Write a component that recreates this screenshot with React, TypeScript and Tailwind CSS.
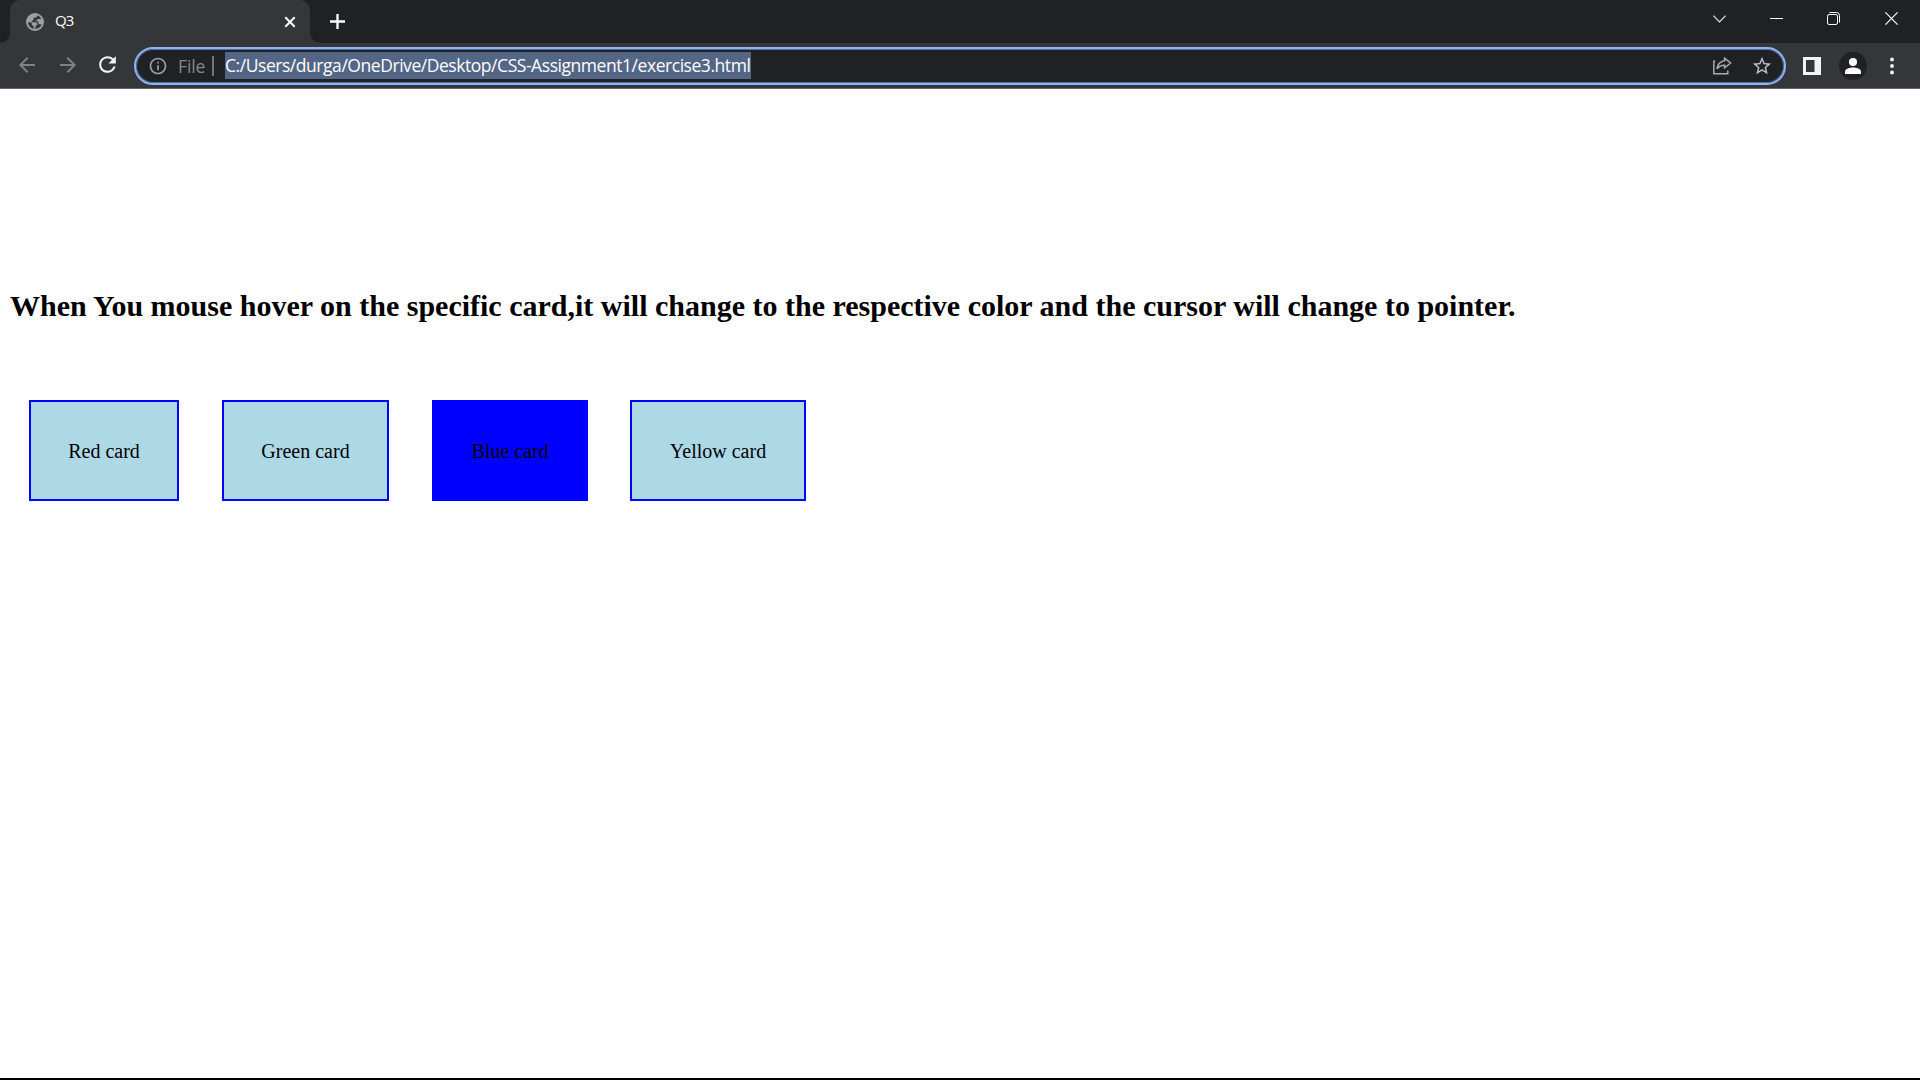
import React from "react";
import { MdRefresh, MdStarBorder, MdInfoOutline, MdArrowBack, MdArrowForward } from "react-icons/md";

function Globe() {
  return (
    <svg className="ml-[2px] size-[18px] shrink-0" viewBox="0 0 18 18">
      <circle cx="9" cy="9" r="9" fill="#9aa0a6" />
      <g fill="#35363a">
        <path d="M11.400 2.300C11.200 4 10.300 4.700 8.800 4.700H7.400V6.200C7.400 7.300 6.800 7.900 5.600 7.900V9.200H9.200C10.600 9.200 11.300 10 11.300 11.400V12.200H9.700V14C9.700 14.900 9 15.600 8.100 15.800C11.500 16.300 14.700 14.400 15.700 11.200H13.800C12.800 11.200 12.200 10.600 12.200 9.500V8.400H10.400C10.400 6.800 11.200 5.900 12.700 5.900H15.200C14.300 4.200 13 3 11.400 2.300z" />
        <path d="M2.100 9.200H3.900C5.300 9.200 6 10 6 11.200C6 12.300 6.600 12.800 7.700 12.800V15.800C4.500 15.200 2.100 12.500 2.100 9.200z" />
      </g>
    </svg>
  );
}

function TabStrip() {
  return (
    <div className="flex h-[43px] items-start bg-[#202124] text-white">
      <div className="flex h-[43px] w-[10px] items-end bg-[#35363a]">
        <div className="h-full w-full rounded-br-[10px] bg-[#202124]" />
      </div>
      <div className="flex h-[43px] w-[300px] items-center rounded-t-[10px] bg-[#35363a] pl-[14px] pr-[14px]">
        <Globe />
        <span className="ml-[11px] grow pb-[4px] font-['Open_Sans',sans-serif] text-[15px] leading-5 tracking-[-0.8px]">Q3</span>
        <svg className="size-3 shrink-0" viewBox="0 0 12 12" fill="none" stroke="#fff" strokeWidth="2">
          <path d="M1.3 1.3l9.4 9.4M10.7 1.3L1.3 10.7" />
        </svg>
      </div>
      <div className="flex h-[43px] w-[10px] bg-[#35363a]">
        <div className="h-full w-full rounded-bl-[10px] bg-[#202124]" />
      </div>
      <svg className="ml-[10px] mt-[14px] size-[15px]" viewBox="0 0 15 15" fill="none" stroke="#fff" strokeWidth="2.3">
        <path d="M7.5 0v15M0 7.5h15" />
      </svg>
      <div className="ml-auto flex h-[37px] items-center">
        <svg className="mr-[44px] h-[8px] w-[13px]" viewBox="0 0 13 8" fill="none" stroke="#e8e8e8" strokeWidth="1.1">
          <path d="M.4 .7l6.1 6.3L12.6 .7" />
        </svg>
        <svg className="mr-[44px] h-[13px] w-[13px]" viewBox="0 0 13 13" stroke="#fff">
          <path d="M0 6.5h13" />
        </svg>
        <svg className="mr-[45px] size-[13px]" viewBox="0 0 13 13" fill="none" stroke="#fff">
          <rect x=".5" y="2.5" width="10" height="10" rx="1.6" />
          <path d="M2.5 .5h7a3 3 0 0 1 3 3v7" />
        </svg>
        <svg className="mr-[22px] size-[13px]" viewBox="0 0 13 13" fill="none" stroke="#fff" strokeWidth="1.2">
          <path d="M.4 .4l12.2 12.2M12.6 .4L.4 12.6" />
        </svg>
      </div>
    </div>
  );
}

function Toolbar() {
  return (
    <div className="flex h-[46px] items-center border-b border-[#626366] bg-[#35363a] font-['Open_Sans',sans-serif]">
      <MdArrowBack className="mb-[2px] ml-[15px] size-6 shrink-0 text-[#808184]" />
      <MdArrowForward className="mb-[2px] ml-[17px] size-6 shrink-0 text-[#808184]" />
      <MdRefresh className="mb-[2px] ml-[15px] size-[25px] shrink-0 text-[#f1f3f4]" />
      <div className="ml-[14px] flex h-[38px] w-[1652px] items-center rounded-full border-2 border-[#8ab4f8] bg-[#202124] inset-ring inset-ring-[#566d94]">
        <MdInfoOutline className="ml-[12px] size-[20px] shrink-0 text-[#9aa0a6]" />
        <span className="ml-[10px] w-[27px] whitespace-nowrap text-[17.5px] leading-5 tracking-[-0.1px] text-[#85888c]">File</span>
        <div className="ml-[7px] h-5 w-[2px] bg-[#737578]" />
        <span className="ml-[11px] h-[27px] w-[526px] whitespace-nowrap bg-[#546685] text-[17.5px] leading-[27px] tracking-[-0.45px] text-white">
          C:/Users/durga/OneDrive/Desktop/CSS-Assignment1/exercise3.html
        </span>
        <svg className="ml-auto size-[20px] shrink-0" viewBox="0 0 20 20" fill="none" stroke="#a9abae" strokeWidth="1.5">
          <path d="M3.200 5.200H1.800v12.600h14v-3.200" />
          <path d="M12.600 2.200l6 4.800-6 4.800V9.200c-3.800 0-6 1.300-7.600 3.700.5-4.100 2.900-7.500 7.600-8.100z" />
        </svg>
        <MdStarBorder className="ml-[19px] mr-[11px] size-[22px] shrink-0 text-[#bdc1c6]" />
      </div>
      <svg className="ml-[17px] size-[18px] shrink-0" viewBox="0 0 18 18">
        <path fill="#f1f3f4" fillRule="evenodd" d="M0 0h18v18H0zM3 3v12h8.500V3z" />
      </svg>
      <div className="ml-[18px] flex size-7 shrink-0 items-center justify-center rounded-full bg-[#202124]">
        <svg className="size-4" viewBox="0 0 16 16" fill="#fff">
          <circle cx="8" cy="4" r="4" />
          <path d="M0 16v-2.600C0 10.700 5 9.500 8 9.500s8 1.200 8 3.900V16z" />
        </svg>
      </div>
      <svg className="ml-[22px] h-[18px] w-[6px] shrink-0" viewBox="0 0 6 18" fill="#f1f3f4">
        <circle cx="3" cy="2.500" r="1.900" />
        <circle cx="3" cy="9" r="1.900" />
        <circle cx="3" cy="15.500" r="1.900" />
      </svg>
    </div>
  );
}

const cards = [
  { label: "Red card", style: "w-[150px] bg-[#add8e6]" },
  { label: "Green card", style: "ml-[43px] w-[167px] bg-[#add8e6]" },
  { label: "Blue card", style: "ml-[43px] w-[156px] bg-[#0000ff]" },
  { label: "Yellow card", style: "ml-[42px] w-[176px] bg-[#add8e6]" },
];

export default function App() {
  return (
    <div className="flex h-[1080px] w-[1920px] flex-col overflow-hidden bg-white">
      <TabStrip />
      <Toolbar />
      <main className="grow pt-[200px] font-['Liberation_Serif',serif] text-black">
        <h1 className="ml-[10px] whitespace-nowrap text-[30px] font-bold leading-[34px]">
          When You mouse hover on the specific card,it will change to the respective color and the cursor will change to pointer.
        </h1>
        <div className="ml-[29px] mt-[77px] flex">
          {cards.map((c) => (
            <div
              key={c.label}
              className={`flex h-[101px] cursor-pointer items-center justify-center whitespace-nowrap border-2 border-[#0000ff] pt-[2px] text-[20px] leading-[23px] ${c.style}`}
            >
              {c.label}
            </div>
          ))}
        </div>
      </main>
      <div className="h-[2px] bg-black" />
    </div>
  );
}
